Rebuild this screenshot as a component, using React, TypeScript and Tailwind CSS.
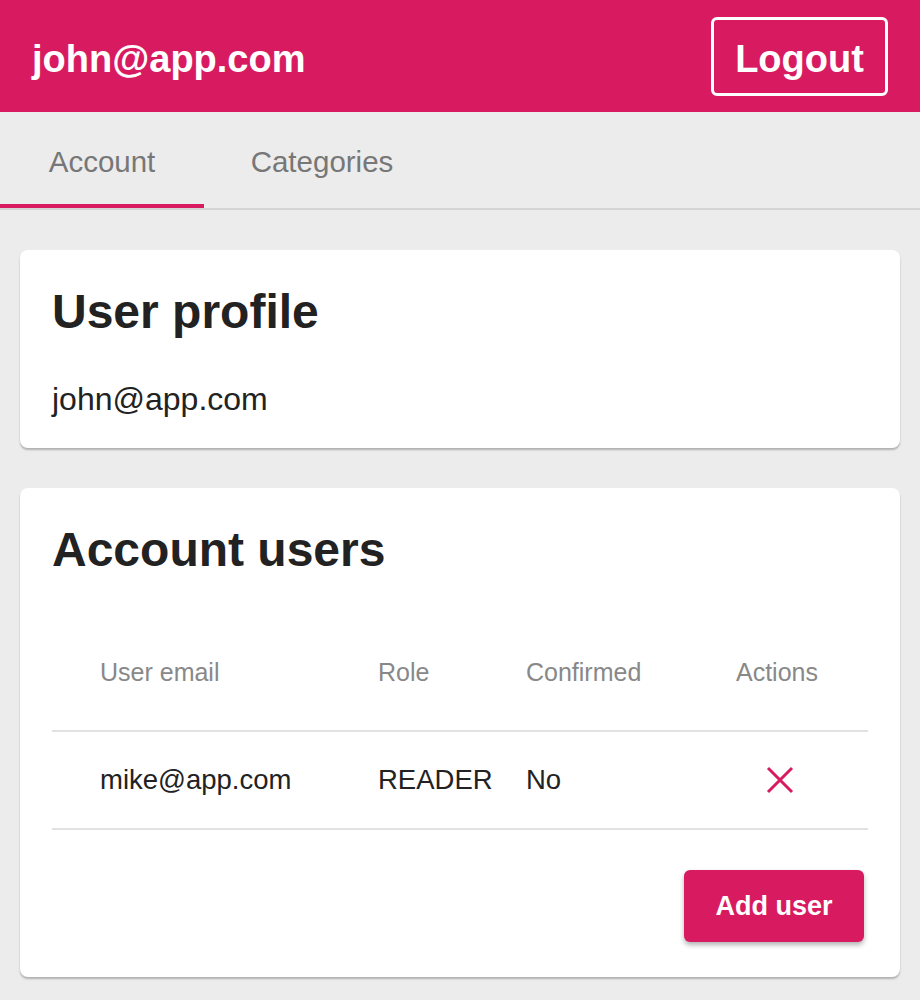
const users = [{ email: "mike@app.com", role: "READER", confirmed: "No" }];

function CloseIcon() {
  return (
    <svg viewBox="0 0 28 28" className="ml-[30px] block h-[28px] w-[28px] text-[#d81b60]" fill="none">
      <path d="M2 2 26 26M26 2 2 26" stroke="currentColor" strokeWidth={3} />
    </svg>
  );
}

export default function App() {
  return (
    <div className="min-h-[1000px] bg-[#ececec] font-['Liberation_Sans',Arial,sans-serif] text-[#222]">
      <header className="flex h-[112px] items-center justify-between bg-[#d81b60] pl-8 pr-8">
        <span className="pt-[6px] text-[38px] font-bold text-white">john@app.com</span>
        <button
          type="button"
          className="flex h-[79px] w-[177px] items-center justify-center rounded-md border-[3px] border-white pt-[6px] text-[38px] font-bold text-white"
        >
          Logout
        </button>
      </header>

      <nav className="flex h-[98px] border-b-2 border-[#d4d4d4]">
        <div className="flex w-[204px] flex-col">
          <div className="flex flex-1 items-center justify-center pt-2 text-[29.5px] text-[#777]">Account</div>
          <div className="h-1 bg-[#d81b60]" />
        </div>
        <div className="flex w-[236px] items-center justify-center pt-1 text-[29.5px] text-[#777]">Categories</div>
      </nav>

      <main className="flex flex-col gap-10 px-5 pt-10">
        <section className="rounded-lg bg-white px-8 pb-[31px] pt-[34px] shadow-[0_2px_2px_rgba(0,0,0,0.25)]">
          <h2 className="text-[48px] font-bold leading-[56px]">User profile</h2>
          <p className="mt-[41px] text-[32px] leading-[36px]">john@app.com</p>
        </section>

        <section className="rounded-lg bg-white px-8 pb-[35px] pt-[34px] shadow-[0_2px_2px_rgba(0,0,0,0.25)]">
          <h2 className="text-[48px] font-bold leading-[56px]">Account users</h2>
          <table className="mt-[63px] w-full border-collapse">
            <thead>
              <tr className="h-[90px] border-b-2 border-[#e2e2e2] text-left text-[25px] text-[#888]">
                <th className="w-[326px] pb-[26px] pl-12 font-normal">User email</th>
                <th className="w-[148px] pb-[26px] font-normal">Role</th>
                <th className="w-[210px] pb-[26px] font-normal">Confirmed</th>
                <th className="pb-[26px] font-normal">Actions</th>
              </tr>
            </thead>
            <tbody>
              {users.map((u) => (
                <tr key={u.email} className="h-[98px] border-b-2 border-[#e2e2e2] text-[27.5px]">
                  <td className="pl-12">{u.email}</td>
                  <td>{u.role}</td>
                  <td>{u.confirmed}</td>
                  <td>
                    <CloseIcon />
                  </td>
                </tr>
              ))}
            </tbody>
          </table>
          <div className="mt-10 flex justify-end pr-1">
            <button
              type="button"
              className="flex h-[72px] w-[180px] items-center justify-center rounded-md bg-[#d81b60] text-[27px] font-bold text-white shadow-[0_3px_5px_rgba(0,0,0,0.3)]"
            >
              Add user
            </button>
          </div>
        </section>
      </main>
    </div>
  );
}
